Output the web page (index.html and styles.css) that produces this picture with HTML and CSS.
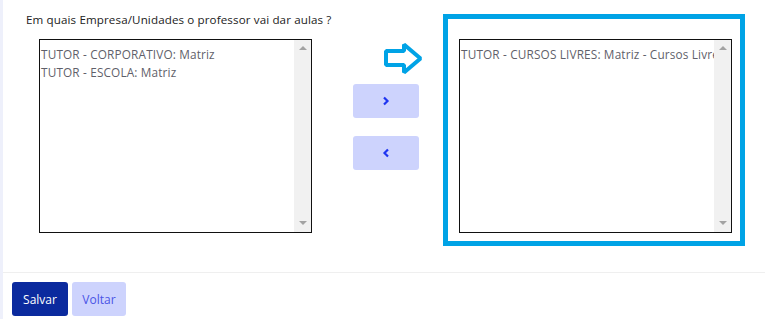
FILE: index.html
```html
<!DOCTYPE html>
<html lang="pt">
<head>
<meta charset="utf-8">
<link rel="stylesheet" href="styles.css">
</head>
<body>
<div class="page">
  <div class="card">
    <div class="row">
      <div class="left-col">
        <div class="label">Em quais Empresa/Unidades o professor vai dar aulas ?</div>
        <div class="listbox">
          <div class="options">
            <div class="opt">TUTOR - CORPORATIVO: Matriz</div>
            <div class="opt">TUTOR - ESCOLA: Matriz</div>
          </div>
          <div class="scrollbar"><span class="tri up"></span><span class="tri down"></span></div>
        </div>
      </div>
      <div class="mid-col">
        <svg class="arrow" width="40" height="33" viewBox="0 0 40 33">
          <polygon points="2,9 20,9 20,2.5 36.5,16.5 20,30.5 20,23 2,23" fill="none" stroke="#00a3e6" stroke-width="4" stroke-linejoin="bevel"/>
        </svg>
        <button class="move">
          <svg width="8" height="10" viewBox="0 0 8 10"><polyline points="2,1.5 5.5,5 2,8.5" fill="none" stroke="#1e35f0" stroke-width="2.2"/></svg>
        </button>
        <button class="move second">
          <svg width="8" height="10" viewBox="0 0 8 10"><polyline points="6,1.5 2.5,5 6,8.5" fill="none" stroke="#1e35f0" stroke-width="2.2"/></svg>
        </button>
      </div>
      <div class="right-box">
        <div class="listbox">
          <div class="options">
            <div class="opt">TUTOR - CURSOS LIVRES: Matriz - Cursos Livres</div>
          </div>
          <div class="scrollbar"><span class="tri up"></span><span class="tri down"></span></div>
        </div>
      </div>
    </div>
  </div>
  <div class="footer">
    <button class="btn primary">Salvar</button>
    <button class="btn secondary">Voltar</button>
  </div>
</div>
</body>
</html>
```

FILE: styles.css
```css
* { box-sizing: border-box; }
html, body { margin: 0; padding: 0; }
body {
  background: #eef0fb;
  font-family: "Open Sans", "Liberation Sans", sans-serif;
  width: 765px;
  height: 319px;
  overflow: hidden;
}
.page {
  margin-left: 3px;
  background: #fff;
  height: 319px;
}
.card {
  height: 273px;
  border-bottom: 1px solid #efefef;
}
.row {
  display: flex;
  align-items: flex-start;
  padding-left: 23px;
  padding-top: 13px;
}
.left-col {
  display: flex;
  flex-direction: column;
  width: 286px;
  flex: none;
}
.label {
  font-size: 11.6px;
  line-height: 14px;
  color: #222;
  margin-bottom: 12px;
  letter-spacing: 0.12px;
  white-space: nowrap;
}
.listbox {
  display: flex;
  width: 273px;
  height: 194px;
  border: 1px solid #111;
  background: #fff;
}
.left-col .listbox { margin-left: 13px; }
.options {
  flex: 1;
  padding-top: 5px;
  padding-left: 1px;
  overflow: hidden;
}
.opt {
  font-size: 11.8px;
  line-height: 18px;
  color: #5f5f6a;
  white-space: nowrap;
  letter-spacing: 0.15px;
}
.scrollbar {
  width: 17px;
  flex: none;
  background: #f1f1f1;
  display: flex;
  flex-direction: column;
  justify-content: space-between;
  align-items: center;
  padding: 6px 0 7px;
}
.tri {
  width: 0; height: 0;
  border-left: 4px solid transparent;
  border-right: 4px solid transparent;
}
.tri.up { border-bottom: 4px solid #a3a3a3; }
.tri.down { border-top: 4px solid #a3a3a3; }
.mid-col {
  display: flex;
  flex-direction: column;
  margin-left: 41px;
  width: 66px;
  flex: none;
}
.arrow {
  display: block;
  margin-top: 29px;
  margin-left: 31px;
}
.move {
  width: 66px;
  height: 34px;
  border: none;
  border-radius: 3px;
  background: #cdd3fd;
  margin-top: 9px;
  display: flex;
  align-items: center;
  justify-content: center;
  padding: 0;
}
.move svg { display: block; }
.move.second { margin-top: 18px; }
.right-box {
  flex: none;
  margin-left: 24px;
  margin-top: 1px;
  width: 302px;
  height: 232px;
  border: 5px solid #00a3e6;
  padding: 20px 8px 0 11px;
}
.footer {
  display: flex;
  gap: 4px;
  padding: 9px 0 0 9px;
}
.btn {
  height: 34px;
  border: none;
  border-radius: 3px;
  font-family: "Open Sans", "Liberation Sans", sans-serif;
  font-size: 12px;
  padding: 0;
}
.btn.primary {
  width: 56px;
  background: #0b2a9e;
  color: #fff;
}
.btn.secondary {
  width: 54px;
  background: #cdd3fd;
  color: #4a55e6;
}
```
